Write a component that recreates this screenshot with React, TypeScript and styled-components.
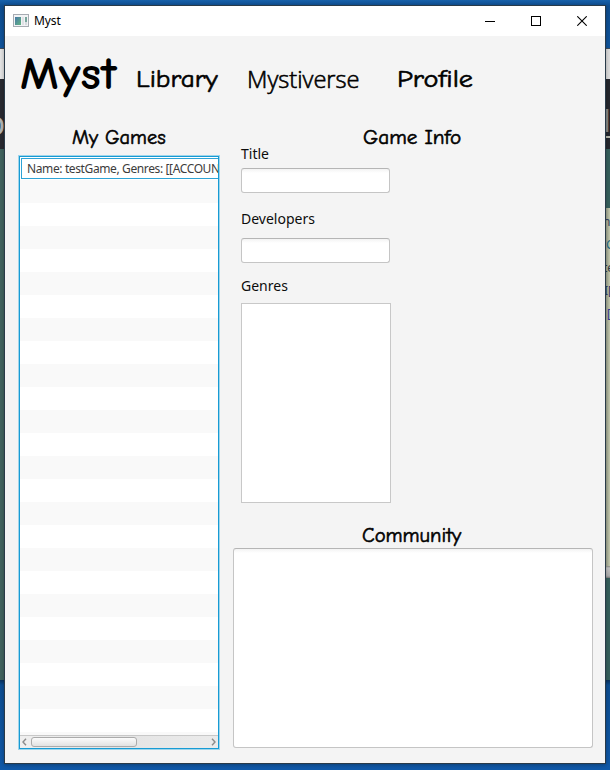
import React from "react";
import styled, { createGlobalStyle } from "styled-components";

const GlobalStyle = createGlobalStyle`
  * { box-sizing: border-box; }
  body { margin: 0; overflow: hidden; }
`;

const ui = `"Segoe UI", "Noto Sans", "Open Sans", sans-serif`;
const light = `"Segoe UI", "Open Sans", "Noto Sans", sans-serif`;
const comic = `"Comic Sans MS", "Comic Neue", "Noto Sans", sans-serif`;

const Desktop = styled.div`
  display: flex;
  width: 610px;
  height: 770px;
  background: linear-gradient(#1761aa 0, #0f4e90 6px, #10549c 48px, #0d4d91 680px, #1059a8 770px);
`;

const Edge = styled.div`
  display: flex;
  flex-direction: column;
  width: 4px;
  overflow: hidden;
`;

const Slice = styled.div<{ $h: number; $fill: string }>`
  flex: none;
  height: ${(p) => p.$h}px;
  background: ${(p) => p.$fill};
  overflow: hidden;
`;

const Fragment = styled.div<{ $size: number; $color: string; $shift: number; $top: number }>`
  height: 23px;
  margin: ${(p) => p.$top}px 0 0 ${(p) => p.$shift}px;
  font: ${(p) => p.$size}px/23px ${ui};
  color: ${(p) => p.$color};
  white-space: nowrap;
`;

const AppWindow = styled.div`
  display: flex;
  flex-direction: column;
  width: 602px;
  height: 759px;
  margin-top: 5px;
  border: 1px solid #293a48;
  background: #f4f4f4;
  box-shadow: 0 1px 4px rgba(0, 0, 0, 0.3);
  z-index: 1;
`;

const TitleBar = styled.header`
  display: flex;
  align-items: center;
  height: 30px;
  padding-left: 8px;
  background: #fff;
`;

const WindowTitle = styled.span`
  flex: 1;
  margin-left: 5px;
  font: 12px/16px ${ui};
  letter-spacing: -0.1px;
  color: #000;
`;

const WindowButton = styled.div`
  display: flex;
  align-items: center;
  justify-content: center;
  width: 46px;
  height: 30px;
`;

const Nav = styled.nav`
  display: flex;
  height: 84px;
  padding-left: 15px;
`;

const NavItem = styled.div<{
  $w: number;
  $size: number;
  $top: number;
  $fit: number;
  $weight: number;
  $stroke: number;
  $plain?: boolean;
}>`
  flex: none;
  width: ${(p) => p.$w}px;
  height: 60px;
  margin-top: ${(p) => p.$top}px;
  font: ${(p) => p.$weight} ${(p) => p.$size}px/60px ${(p) => (p.$plain ? light : comic)};
  color: #000;
  white-space: nowrap;
  & > span {
    display: inline-block;
    transform: scaleX(${(p) => p.$fit});
    transform-origin: left;
    -webkit-text-stroke: ${(p) => p.$stroke}px #000;
  }
`;

const Columns = styled.main`
  display: flex;
  padding-left: 13px;
`;

const Library = styled.section`
  width: 202px;
  margin-right: 13px;
`;

const Details = styled.section`
  display: flex;
  flex-direction: column;
  align-items: flex-start;
  width: 360px;
`;

const Heading = styled.h2<{ $indent: number; $fit: number; $h: number; $top?: number }>`
  height: ${(p) => p.$h}px;
  margin: ${(p) => p.$top ?? 0}px 0 0;
  padding: 7px 0 0 ${(p) => p.$indent}px;
  font: 400 21px/20px ${comic};
  color: #000;
  white-space: nowrap;
  & > span {
    display: inline-block;
    transform: scaleX(${(p) => p.$fit});
    transform-origin: left;
    -webkit-text-stroke: 0.6px #000;
  }
`;

const GameList = styled.div`
  display: flex;
  flex-direction: column;
  width: 200px;
  height: 593px;
  margin: 0 1px;
  border: 1px solid #179bd4;
  box-shadow: 0 0 0 1px #9fd5eb;
  background: #f9f9f9;
  overflow: hidden;
`;

const Row = styled.div<{ $odd: boolean }>`
  flex: none;
  height: 23px;
  background: ${(p) => (p.$odd ? "#f9f9f9" : "#fff")};
`;

const FocusedCell = styled.div`
  width: 330px;
  height: 21px;
  margin: 1px;
  padding-left: 5px;
  border: 1px solid #2ea3d5;
  font: 12px/19px ${ui};
  letter-spacing: -0.38px;
  color: #3c3c3c;
  white-space: nowrap;
`;

const ScrollBar = styled.div`
  display: flex;
  align-items: center;
  height: 13px;
  margin-top: 3px;
  padding: 0 2px;
  border-top: 1px solid #c8c8c8;
  background: linear-gradient(90deg, #efefef, #e4e4e4 50%, #ebebeb);
`;

const Thumb = styled.div`
  width: 106px;
  height: 10px;
  margin: 0 auto 0 4px;
  border: 1px solid #ababab;
  border-radius: 3px;
  background: linear-gradient(#fbfbfb, #e2e2e2);
`;

const FieldLabel = styled.label<{ $top: number; $h: number }>`
  height: ${(p) => p.$h}px;
  margin: ${(p) => p.$top}px 0 0 8px;
  font: 14px/20px ${ui};
  color: #0c0c0c;
`;

const TextInput = styled.div`
  width: 149px;
  height: 25px;
  margin-left: 8px;
  border: 1px solid #c5c5c5;
  border-top-color: #b5b5b5;
  border-radius: 3px;
  background: linear-gradient(#f3f3f3, #fff 4px);
`;

const GenreList = styled.div`
  width: 150px;
  height: 200px;
  margin-left: 8px;
  border: 1px solid #c8c8c8;
  background: #fff;
`;

const CommunityBox = styled.div`
  width: 360px;
  height: 200px;
  border: 1px solid #c5c5c5;
  border-top-color: #b5b5b5;
  border-radius: 3px;
  background: linear-gradient(#f3f3f3, #fff 4px);
`;

const Arrow = ({ d }: { d: string }) => (
  <svg width="5" height="8" viewBox="0 0 5 8" fill="none" stroke="#8b8b8b" strokeWidth="1.4">
    <path d={d} />
  </svg>
);

const rows = Array.from({ length: 25 }, (_, i) => i);

export default function App() {
  return (
    <>
      <GlobalStyle />
      <Desktop>
        <Edge>
          <Slice $h={48} $fill="transparent" />
          <Slice $h={1} $fill="#3f4c5b" />
          <Slice $h={30} $fill="#e4e4e4" />
          <Slice $h={70} $fill="#292a31">
            <Fragment $size={33} $color="#b4b5b5" $shift={-15} $top={32}>b</Fragment>
          </Slice>
          <Slice $h={531} $fill="#41635f" />
          <Slice $h={5} $fill="linear-gradient(#0a315c, #0d4d91)" />
        </Edge>
        <AppWindow>
          <TitleBar>
            <svg width="16" height="14" viewBox="0 0 16 14">
              <defs>
                <linearGradient id="pane" x1="0" y1="0" x2="1" y2="1">
                  <stop offset="0" stopColor="#4778a8" />
                  <stop offset="1" stopColor="#62b481" />
                </linearGradient>
              </defs>
              <rect x=".5" y=".5" width="15" height="12" fill="#f2f3f5" stroke="#a6abb2" />
              <rect x="2" y="3" width="6" height="8" fill="url(#pane)" />
              <rect x="9" y="3" width="2" height="8" fill="#dfe1e5" />
              <rect x="12" y="3" width="2" height="5" fill="#77a69c" />
              <rect x="12" y="8" width="2" height="3" fill="#d5dade" />
            </svg>
            <WindowTitle>Myst</WindowTitle>
            <WindowButton>
              <svg width="10" height="10" shapeRendering="crispEdges"><path d="M0 5.5H10" stroke="#000" /></svg>
            </WindowButton>
            <WindowButton>
              <svg width="10" height="10"><rect x=".5" y=".5" width="9" height="9" fill="none" stroke="#000" /></svg>
            </WindowButton>
            <WindowButton>
              <svg width="10" height="10"><path d="M.3 .3L9.7 9.7M9.7 .3L.3 9.7" stroke="#000" strokeWidth="1.1" /></svg>
            </WindowButton>
          </TitleBar>
          <Nav>
            <NavItem $w={116} $size={47} $top={8} $fit={1.02} $weight={700} $stroke={0}><span>Myst</span></NavItem>
            <NavItem $w={111} $size={25} $top={13} $fit={1.09} $weight={400} $stroke={0.6}><span>Library</span></NavItem>
            <NavItem $w={150} $size={24} $top={13} $fit={0.985} $weight={300} $stroke={0.6} $plain><span>Mystiverse</span></NavItem>
            <NavItem $w={90} $size={25} $top={13} $fit={1.13} $weight={400} $stroke={0.6}><span>Profile</span></NavItem>
          </Nav>
          <Columns>
            <Library>
              <Heading $indent={54} $fit={0.97} $h={36}><span>My Games</span></Heading>
              <GameList>
                {rows.map((i) => (
                  <Row key={i} $odd={i % 2 === 1}>
                    {i === 0 && <FocusedCell>Name: testGame, Genres: [[ACCOUNTING]]</FocusedCell>}
                  </Row>
                ))}
                <ScrollBar>
                  <Arrow d="M4 .8L1 4L4 7.2" />
                  <Thumb />
                  <Arrow d="M1 .8L4 4L1 7.2" />
                </ScrollBar>
              </GameList>
            </Library>
            <Details>
              <Heading $indent={130} $fit={1.01} $h={24}><span>Game Info</span></Heading>
              <FieldLabel $top={0} $h={24}>Title</FieldLabel>
              <TextInput />
              <FieldLabel $top={16} $h={29}>Developers</FieldLabel>
              <TextInput />
              <FieldLabel $top={13} $h={27}>Genres</FieldLabel>
              <GenreList />
              <Heading $indent={129} $fit={0.98} $h={30} $top={15}><span>Community</span></Heading>
              <CommunityBox />
            </Details>
          </Columns>
        </AppWindow>
        <Edge>
          <Slice $h={48} $fill="transparent" />
          <Slice $h={1} $fill="#3f4c5b" />
          <Slice $h={30} $fill="#dcdcdc" />
          <Slice $h={57} $fill="#25272e">
            <Fragment $size={30} $color="#85888a" $shift={-3} $top={30}>l,</Fragment>
          </Slice>
          <Slice $h={2} $fill="#b9bbb0" />
          <Slice $h={11} $fill="#25272e" />
          <Slice $h={59} $fill="#36605d" />
          <Slice $h={358} $fill="linear-gradient(90deg, #9ea58f, #c5c9ae)">
            <Fragment $size={12} $color="#34405c" $shift={-3} $top={2}>n</Fragment>
            <Fragment $size={12} $color="#246d87" $shift={-4} $top={0}>IC</Fragment>
            <Fragment $size={12} $color="#303a44" $shift={-3} $top={0}>te</Fragment>
            <Fragment $size={12} $color="#303a68" $shift={-2} $top={0}>I[</Fragment>
            <Fragment $size={12} $color="#303a98" $shift={1} $top={0}>[</Fragment>
          </Slice>
          <Slice $h={12} $fill="linear-gradient(#8c8e86, #c3c3c3 2px, #adadad 10px, #777)" />
          <Slice $h={102} $fill="#36605d" />
          <Slice $h={5} $fill="linear-gradient(#0a315c, #0d4d91)" />
        </Edge>
      </Desktop>
    </>
  );
}
